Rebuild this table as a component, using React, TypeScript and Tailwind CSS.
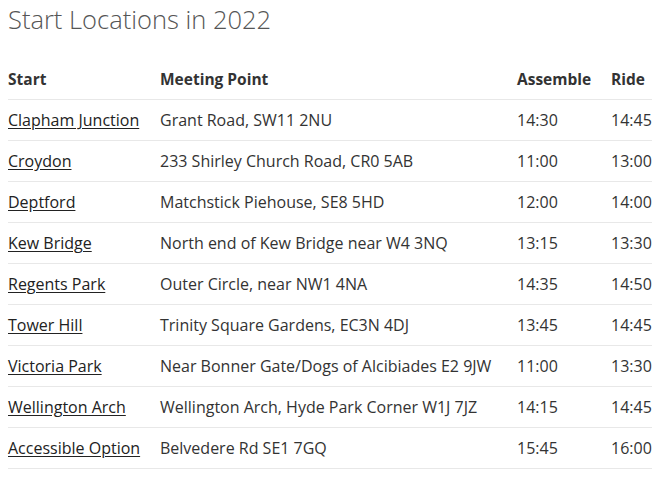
import React from "react";

// start points
const rows = [
  { start: "Clapham Junction", meet: "Grant Road, SW11 2NU", assemble: "14:30", ride: "14:45" },
  { start: "Croydon", meet: "233 Shirley Church Road, CR0 5AB", assemble: "11:00", ride: "13:00" },
  { start: "Deptford", meet: "Matchstick Piehouse, SE8 5HD", assemble: "12:00", ride: "14:00" },
  { start: "Kew Bridge", meet: "North end of Kew Bridge near W4 3NQ", assemble: "13:15", ride: "13:30" },
  { start: "Regents Park", meet: "Outer Circle, near NW1 4NA", assemble: "14:35", ride: "14:50" },
  { start: "Tower Hill", meet: "Trinity Square Gardens, EC3N 4DJ", assemble: "13:45", ride: "14:45" },
  { start: "Victoria Park", meet: "Near Bonner Gate/Dogs of Alcibiades E2 9JW", assemble: "11:00", ride: "13:30" },
  { start: "Wellington Arch", meet: "Wellington Arch, Hyde Park Corner W1J 7JZ", assemble: "14:15", ride: "14:45" },
  { start: "Accessible Option", meet: "Belvedere Rd SE1 7GQ", assemble: "15:45", ride: "16:00" },
];

export default function App() {
  return (
    <div className="w-[665px] h-[477px] bg-white px-2 text-[#333] font-['Open_Sans',sans-serif] overflow-hidden">
      <h2 className="text-[25.5px] leading-[38px] font-light text-[#555]">Start Locations in 2022</h2>

      <table className="w-[644px] mt-[20px] table-fixed border-collapse text-[16px]">
        <thead>
          <tr className="border-b border-[#e8e8e8]">
            <th className="w-[152px] text-left font-bold h-[41px] pt-[2px] text-[15.5px]">Start</th>
            <th className="w-[357px] text-left font-bold pt-[2px] text-[15.5px]">Meeting Point</th>
            <th className="w-[94px] text-left font-bold pt-[2px] text-[15.5px]">Assemble</th>
            <th className="text-left font-bold pt-[2px] text-[15.5px]">Ride</th>
          </tr>
        </thead>
        <tbody>
          {rows.map((r) => (
            <tr key={r.start} className="border-b border-[#e8e8e8] h-[41px]">
              <td className="pt-px">
                <a href="#" className="underline underline-offset-2 text-[#222]">
                  {r.start}
                </a>
              </td>
              <td className="pt-px">{r.meet}</td>
              <td className="pt-px">{r.assemble}</td>
              <td className="pt-px">{r.ride}</td>
            </tr>
          ))}
        </tbody>
      </table>
    </div>
  );
}
